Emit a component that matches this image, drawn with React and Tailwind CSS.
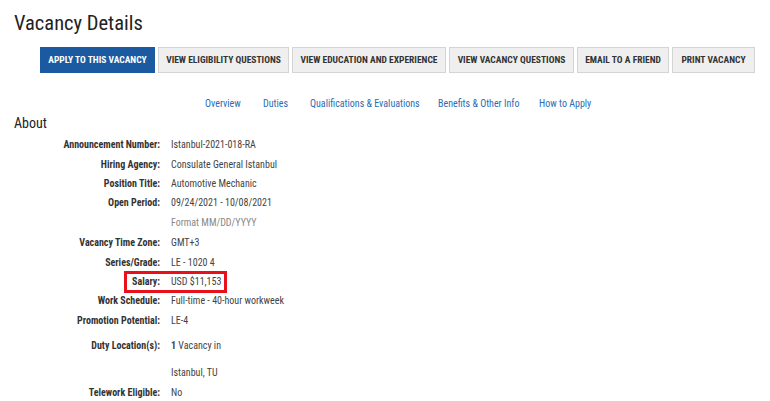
const font = { fontFamily: '"Roboto Condensed", "Liberation Sans Narrow", Roboto, sans-serif' };

const buttons = [
    { label: 'APPLY TO THIS VACANCY', w: 'w-[115px]', primary: true },
    { label: 'VIEW ELIGIBILITY QUESTIONS', w: 'w-[131px]' },
    { label: 'VIEW EDUCATION AND EXPERIENCE', w: 'w-[154px]' },
    { label: 'VIEW VACANCY QUESTIONS', w: 'w-[125px]' },
    { label: 'EMAIL TO A FRIEND', w: 'w-[92px]' },
    { label: 'PRINT VACANCY', w: 'w-[83px]' },
];

const Row = ({ label, children, className = 'h-[19.4px]', box }) => (
    <div className={`relative grid grid-cols-[160px_1fr] gap-x-[11px] items-center ${className}`}>
        <div className="text-right font-bold text-[10px] text-[#333]">{label}</div>
        <div className="text-[10px] text-[#444]">{children}</div>
        {box && <div className="absolute left-[124px] top-[-1px] w-[103px] h-[22px] border-[3px] border-[#e8101a]" />}
    </div>
);

export default function App() {
    return (
        <div className="w-[770px] h-[401px] overflow-hidden bg-white" style={font}>
            <h1 className="pl-[14px] pt-[9px] text-[20.5px] leading-[28px] text-[#222]">Vacancy Details</h1>

            <div className="flex gap-[3px] pl-[40px] mt-[10px]">
                {buttons.map((b) => (
                    <div
                        key={b.label}
                        className={`${b.w} h-[26px] flex items-center justify-center text-[9.5px] font-bold whitespace-nowrap border ${b.primary ? 'bg-[#1b5aa0] border-[#1b5aa0] text-white' : 'bg-[#efefef] border-[#d4d4d4] text-[#333]'}`}
                    >
                        {b.label}
                    </div>
                ))}
            </div>

            <div className="flex pl-[205px] mt-[23px] text-[10px] text-[#2c6db3] h-[14px] items-center">
                <span className="w-[58px]">Overview</span>
                <span className="w-[47px]">Duties</span>
                <span className="w-[128px]">Qualifications &amp; Evaluations</span>
                <span className="w-[101px]">Benefits &amp; Other Info</span>
                <span>How to Apply</span>
            </div>

            <h2 className="pl-[14px] mt-[3px] text-[14px] leading-[20px] text-[#222]">About</h2>

            <div className="mt-[2px]">
                <Row label="Announcement Number:">Istanbul-2021-018-RA</Row>
                <Row label="Hiring Agency:">Consulate General Istanbul</Row>
                <Row label="Position Title:">Automotive Mechanic</Row>
                <Row label="Open Period:">09/24/2021 - 10/08/2021</Row>
                <Row label=""><span className="text-[#888]">Format MM/DD/YYYY</span></Row>
                <div className="h-[1px]" />
                <Row label="Vacancy Time Zone:">GMT+3</Row>
                <Row label="Series/Grade:">LE - 1020 4</Row>
                <Row label="Salary:" box>USD $11,153</Row>
                <Row label="Work Schedule:">Full-time - 40-hour workweek</Row>
                <Row label="Promotion Potential:">LE-4</Row>
                <div className="h-[6px]" />
                <Row label="Duty Location(s):"><span className="font-bold">1</span> Vacancy in</Row>
                <div className="h-[8px]" />
                <Row label="">Istanbul, TU</Row>
                <Row label="Telework Eligible:">No</Row>
            </div>
        </div>
    );
}
